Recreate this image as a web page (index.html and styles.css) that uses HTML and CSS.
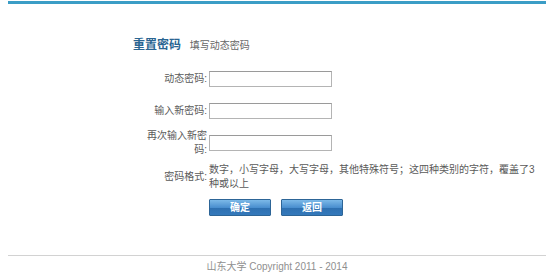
FILE: index.html
```html
<!DOCTYPE html>
<html lang="zh-CN">
<head>
    <meta charset="UTF-8">
    <meta name="viewport" content="width=device-width, initial-scale=1.0">
	<link rel="stylesheet" href="styles.css">
</head>
<body>
	<div class="topbar"></div>
	<div class="title">
		<span class="title-main">重置密码</span>
		<span class="title-sub">填写动态密码</span>
	</div>
	<form class="form">
		<div class="row">
			<label class="label">动态密码:</label>
			<input class="field" type="password">
		</div>
		<div class="row">
			<label class="label">输入新密码:</label>
			<input class="field" type="password">
		</div>
		<div class="row">
			<label class="label">再次输入新密码:</label>
			<input class="field" type="password">
		</div>
		<div class="row row-tall">
			<label class="label">密码格式:</label>
			<div class="value">数字，小写字母，大写字母，其他特殊符号；这四种类别的字符，覆盖了3种或以上</div>
		</div>
		<div class="buttons">
			<button class="btn" type="button">确定</button>
			<button class="btn" type="button">返回</button>
		</div>
	</form>
	<div class="footer">山东大学 Copyright 2011 - 2014</div>
</body>
</html>
```

FILE: styles.css
```css
body {
	margin: 0 8px;
	font-family: "Liberation Sans", "Noto Sans CJK SC", sans-serif;
	font-size: 10px;
	color: #555;
	background: #fff;
}
.topbar {
	margin-top: 1px;
	height: 3px;
	background: #3b9dc6;
}
.title {
	margin: 34px 0 0 125px;
	line-height: 14px;
}
.title-main {
	font-size: 12px;
	font-weight: bold;
	color: #2a6592;
	margin-right: 6px;
}
.title-sub {
	font-size: 10px;
	color: #666;
}
.form {
	margin: 10px 0 0 135px;
}
.row {
	display: flex;
	align-items: center;
	height: 32px;
}
.row-tall {
	height: 36px;
}
.label {
	width: 64px;
	margin-right: 2px;
	text-align: right;
	line-height: 14px;
	color: #5a5a5a;
}
.field {
	box-sizing: border-box;
	width: 123px;
	height: 16px;
	margin: 0;
	padding: 0 2px;
	border: 1px solid #b4b4b4;
	border-top-color: #9a9a9a;
	background: #fff;
}
.value {
	width: 328px;
	line-height: 14px;
	color: #5a5a5a;
}
.buttons {
	display: flex;
	gap: 10px;
	margin: 4px 0 0 66px;
}
.btn {
	width: 62px;
	height: 17px;
	padding: 0;
	border: 1px solid #2d6597;
	border-radius: 1px;
	background: linear-gradient(#7cb9e8, #4a8fcf 50%, #2e70b0 51%, #3479bb);
	color: #fff;
	font-family: "Liberation Sans", "Noto Sans CJK SC", sans-serif;
	font-size: 10px;
	font-weight: bold;
	line-height: 15px;
}
.footer {
	margin-top: 39px;
	padding-top: 4px;
	border-top: 1px solid #d2d2d2;
	text-align: center;
	line-height: 14px;
	color: #8f8f8f;
}
```
